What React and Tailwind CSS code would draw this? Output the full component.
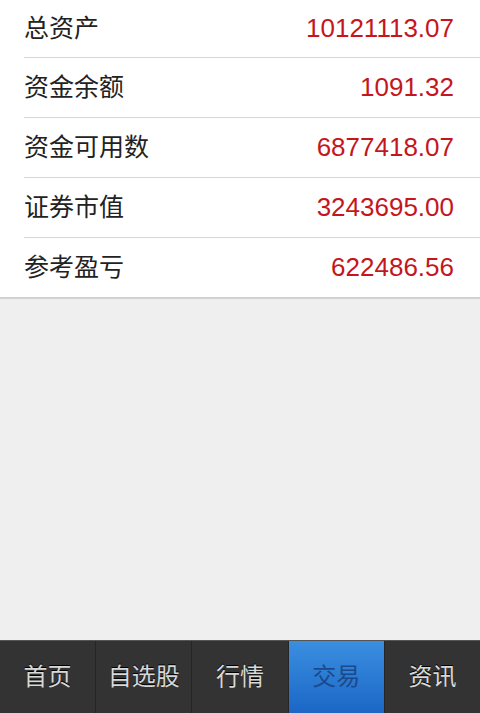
import React from "react";

const rows = [
  { label: "总资产", value: "10121113.07", h: "h-[58px] border-b" },
  { label: "资金余额", value: "1091.32", h: "h-[60px] border-b" },
  { label: "资金可用数", value: "6877418.07", h: "h-[60px] border-b" },
  { label: "证券市值", value: "3243695.00", h: "h-[60px] border-b" },
  { label: "参考盈亏", value: "622486.56", h: "h-[59px]" },
];

const tabs = ["首页", "自选股", "行情", "交易", "资讯"];

export default function App() {
  return (
    <div className="w-[480px] h-[713px] flex flex-col bg-[#efefef] font-['Liberation_Sans','Noto_Sans_CJK_SC',sans-serif]">
      <div className="bg-white border-b-2 border-[#d2d2d2]">
        {rows.map((r) => (
          <div
            key={r.label}
            className={"ml-6 pr-[26px] flex items-center justify-between border-[#d6d6d6] " + r.h}
          >
            <span className="text-[25px] text-[#222]">{r.label}</span>
            <span className="text-[26px] text-[#c4161c]">{r.value}</span>
          </div>
        ))}
      </div>
      <div className="flex-1" />
      <div className="h-[73px] flex bg-[#333] border-t border-[#555]">
        {tabs.map((t, i) => (
          <div
            key={t}
            className={
              "flex-1 flex items-center justify-center text-[24px] " +
              (i > 0 ? "border-l border-[#262626] " : "") +
              (t === "交易"
                ? "bg-gradient-to-b from-[#3a8fe0] to-[#1c66c6] text-[#1b4a8c]"
                : "text-[#d8d8d8] [text-shadow:0_-1px_0_#000]")
            }
          >
            {t}
          </div>
        ))}
      </div>
    </div>
  );
}
